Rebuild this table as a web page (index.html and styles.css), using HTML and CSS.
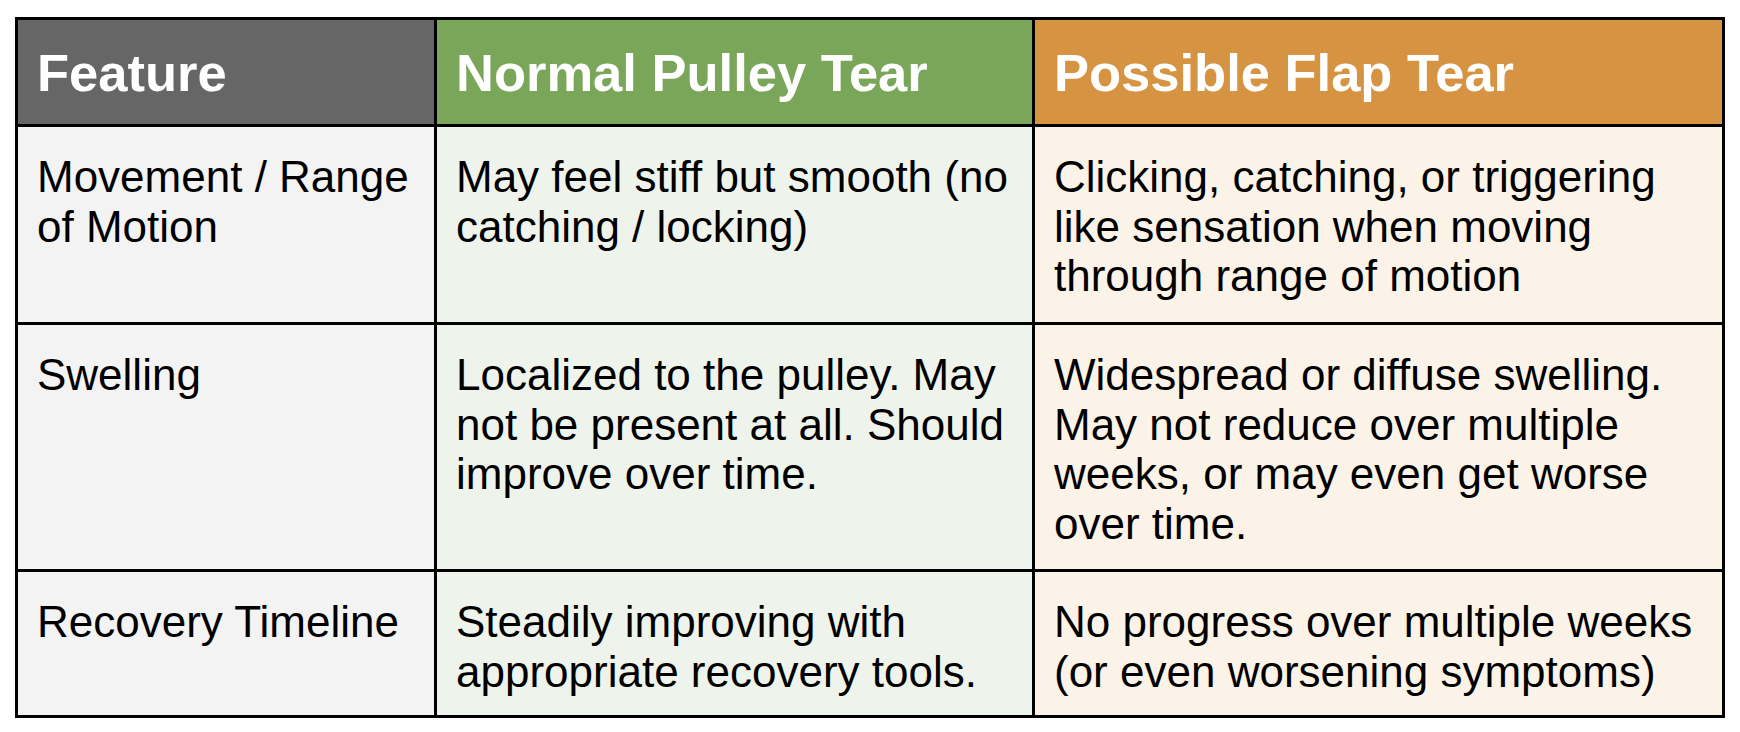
FILE: index.html
```html
<!DOCTYPE html>
<html lang="en">
<head>
<meta charset="utf-8">
<title>Pulley Tear Comparison</title>
<link rel="stylesheet" href="styles.css">
</head>
<body>
<div class="table">
  <div class="cell head head-feature">Feature</div>
  <div class="cell head head-normal">Normal Pulley Tear</div>
  <div class="cell head head-flap">Possible Flap Tear</div>

  <div class="cell feature">Movement / Range<br>of Motion</div>
  <div class="cell normal">May feel stiff but smooth (no<br>catching / locking)</div>
  <div class="cell flap">Clicking, catching, or triggering<br>like sensation when moving<br>through range of motion</div>

  <div class="cell feature">Swelling</div>
  <div class="cell normal">Localized to the pulley. May<br>not be present at all. Should<br>improve over time.</div>
  <div class="cell flap">Widespread or diffuse swelling.<br>May not reduce over multiple<br>weeks, or may even get worse<br>over time.</div>

  <div class="cell feature">Recovery Timeline</div>
  <div class="cell normal">Steadily improving with<br>appropriate recovery tools.</div>
  <div class="cell flap">No progress over multiple weeks<br>(or even worsening symptoms)</div>
</div>
</body>
</html>
```

FILE: styles.css
```css
html, body {
  margin: 0;
  padding: 0;
  background: #ffffff;
}

body {
  padding: 17px 0 0 15px;
  font-family: "Liberation Sans", Arial, sans-serif;
  color: #000000;
}

.table {
  display: grid;
  grid-template-columns: 416px 595px 687px;
  grid-template-rows: 104px 195px 244px 143px;
  gap: 3px;
  padding: 3px;
  background: #000000;
  width: max-content;
}

.cell {
  padding: 25px 19px 0 19px;
  font-size: 44px;
  line-height: 49.6px;
  white-space: nowrap;
}

.head {
  display: flex;
  align-items: center;
  padding: 2px 19px 0 19px;
  font-size: 52.5px;
  font-weight: bold;
  color: #ffffff;
  line-height: 1;
}

.head-feature { background: #666666; }
.head-normal { background: #7aa65a; }
.head-flap { background: #d69443; }

.feature { background: #f3f3f3; }
.normal { background: #eef3ec; }
.flap { background: #fcf3e8; }
```
